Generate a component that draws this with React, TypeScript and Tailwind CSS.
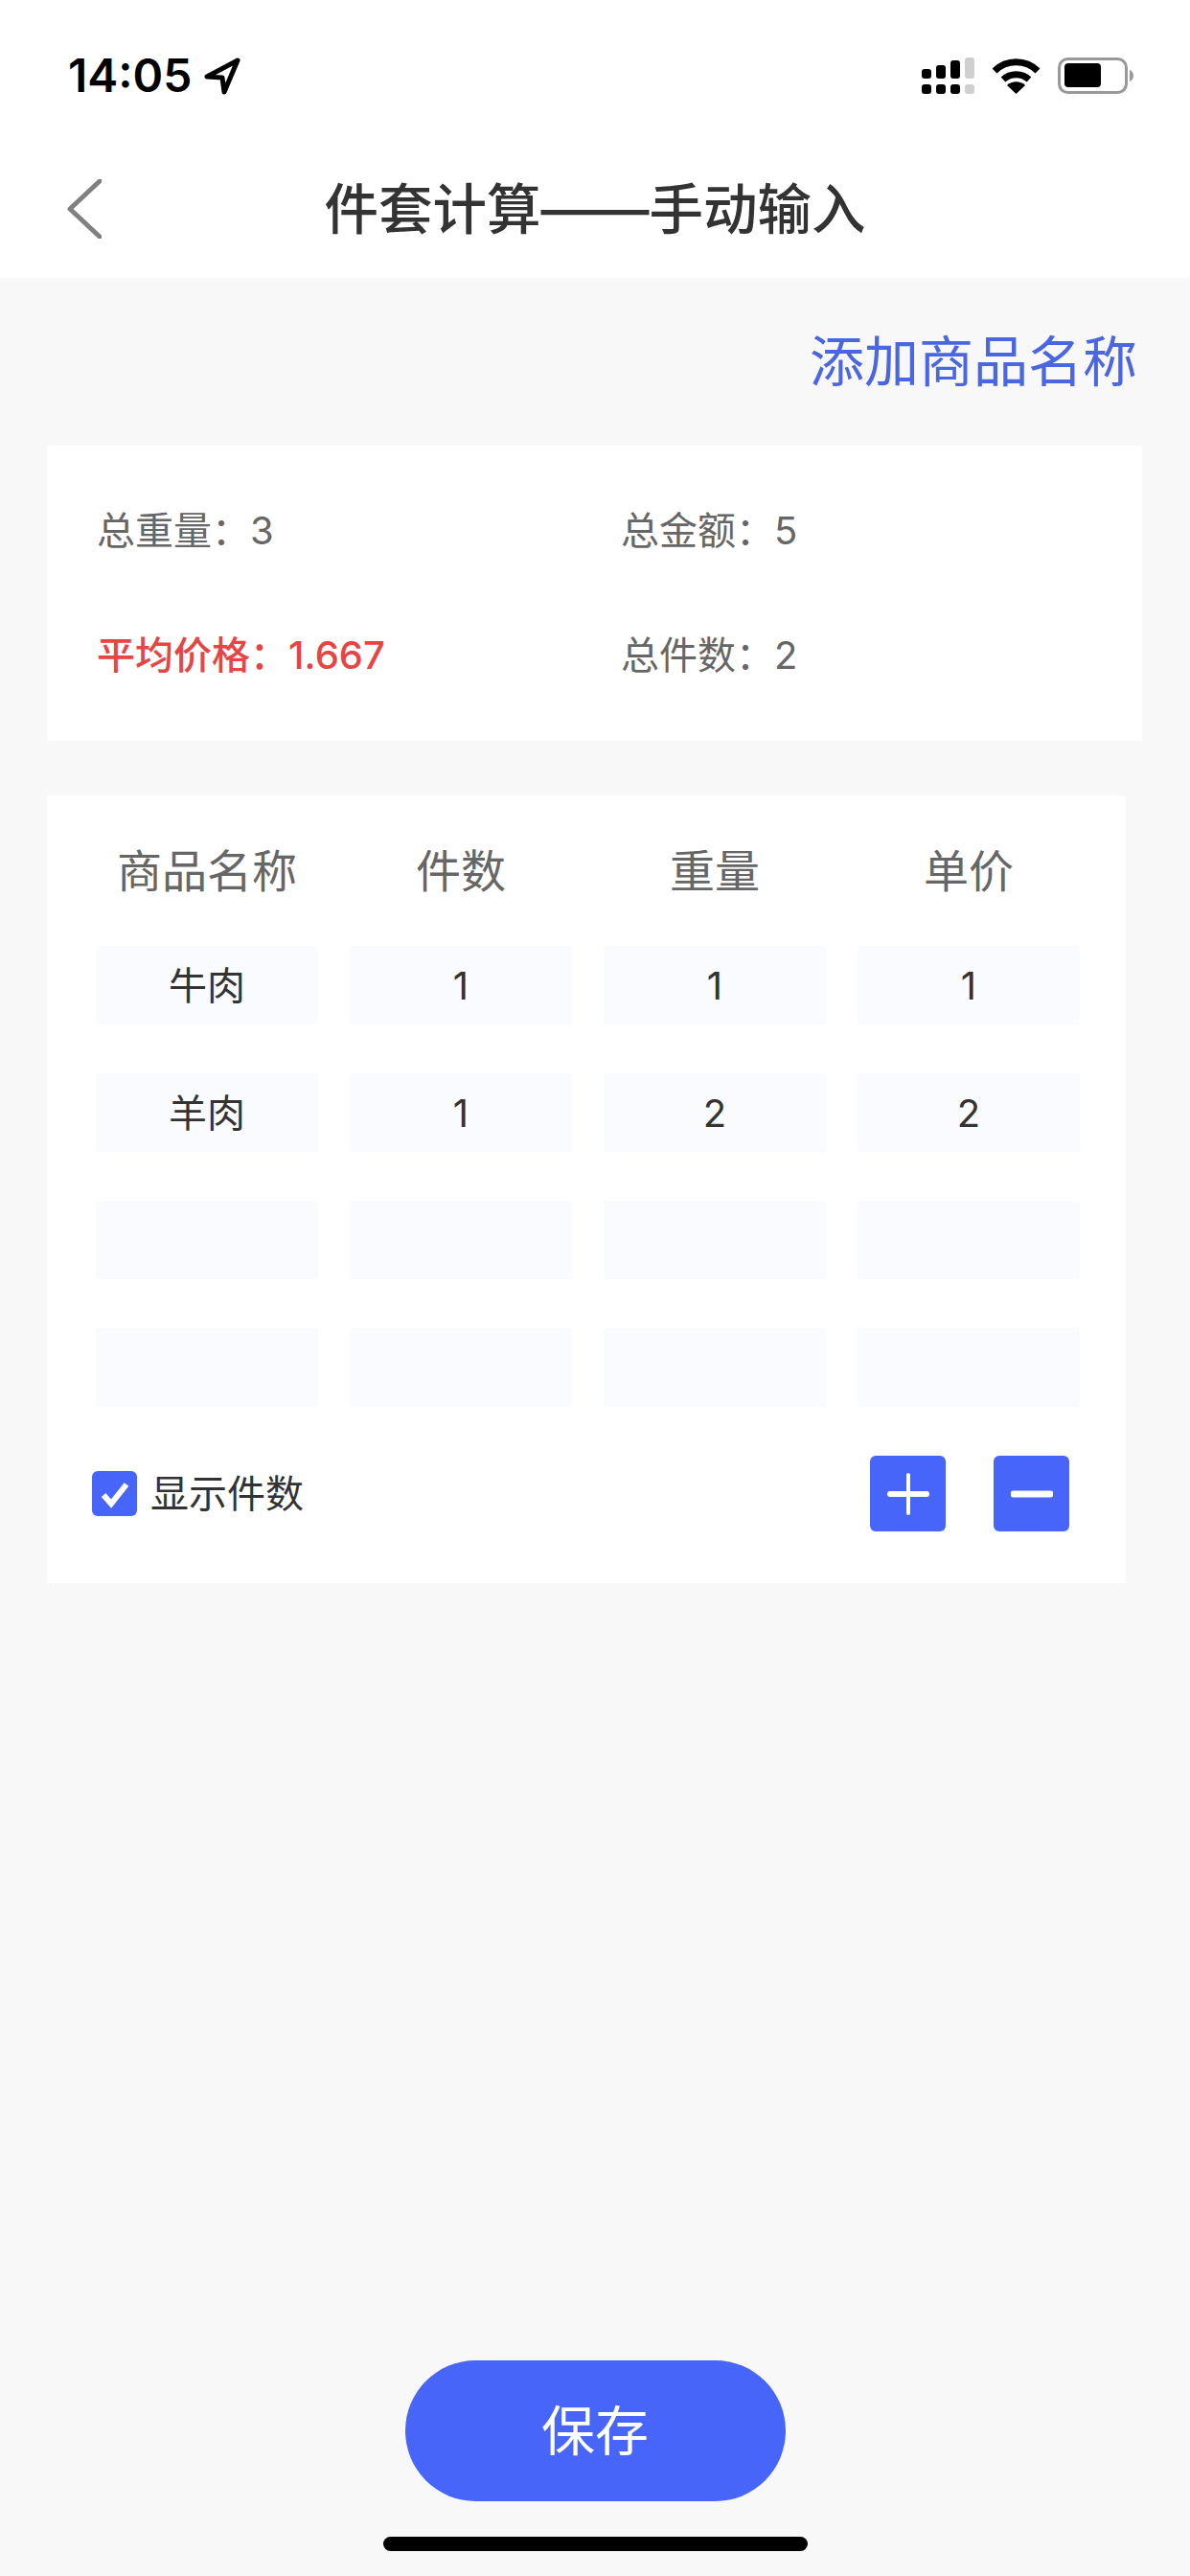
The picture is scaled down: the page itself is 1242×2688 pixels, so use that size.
import React from 'react';

const rows = [
  ['牛肉', '1', '1', '1'],
  ['羊肉', '1', '2', '2'],
  ['', '', '', ''],
  ['', '', '', ''],
];

const headers = ['商品名称', '件数', '重量', '单价'];

const StatusIcons = () => (
  <div className="flex items-center">
    {/* signal */}
    <svg width="55" height="38" viewBox="0 0 55 38">
      <rect x="0" y="12" width="10" height="10" rx="3" fill="#000" />
      <rect x="15" y="8" width="10" height="14" rx="3" fill="#000" />
      <rect x="30" y="3" width="10" height="19" rx="3" fill="#000" />
      <rect x="45" y="0" width="10" height="22" rx="3" fill="#cfcfcf" />
      <rect x="0" y="28" width="10" height="10" rx="3" fill="#000" />
      <rect x="15" y="28" width="10" height="10" rx="3" fill="#000" />
      <rect x="30" y="28" width="10" height="10" rx="3" fill="#000" />
      <rect x="45" y="28" width="10" height="10" rx="3" fill="#cfcfcf" />
    </svg>
    <svg className="ml-[18px]" width="51" height="37" viewBox="0 0 51 37">
      <path d="M3 13 A 32 32 0 0 1 48 13" fill="none" stroke="#000" strokeWidth="7" />
      <path d="M12 22 A 20 20 0 0 1 39 22" fill="none" stroke="#000" strokeWidth="7" />
      <path d="M25.5 37 L 16 28 A 14 14 0 0 1 35 28 Z" fill="#000" />
    </svg>
    <svg className="ml-[18px]" width="79" height="38" viewBox="0 0 79 38">
      <rect x="1.5" y="1.5" width="70" height="35" rx="9" fill="none" stroke="#999" strokeWidth="3" />
      <rect x="7" y="6" width="38" height="25" rx="4" fill="#000" />
      <path d="M75 13 C 78 14 79 17 79 19 C 79 21 78 24 75 25 Z" fill="#999" />
    </svg>
  </div>
);

export default function App() {
  return (
    <div className="flex h-[2688px] w-[1242px] flex-col bg-[#f8f8f9] font-['Inter','Noto_Sans_CJK_SC',sans-serif]">
      <div className="h-[290px] bg-white">
        {/* Status bar */}
        <div className="flex h-[158px] items-center justify-between pl-[71px] pr-[59px]">
          <div className="flex items-center gap-[12px]">
            <span className="text-[48px] font-semibold leading-none text-black">14:05</span>
            <svg width="40" height="40" viewBox="0 0 40 40">
              <path d="M36 4 L4 21 L20 22 L22 37 Z" fill="none" stroke="#000" strokeWidth="5" strokeLinejoin="round" />
            </svg>
          </div>
          <StatusIcons />
        </div>

        {/* Nav */}
        <div className="grid h-[120px] grid-cols-[1fr_auto_1fr] items-center pl-[70px]">
          <svg width="36" height="62" viewBox="0 0 36 62">
            <path d="M34 2 L3 31 L34 60" fill="none" stroke="#808080" strokeWidth="5" strokeLinecap="round" strokeLinejoin="round" />
          </svg>
          <h1 className="-ml-[70px] pt-[3px] text-[56.5px] font-medium leading-none text-[#333]">件套计算——手动输入</h1>
          <div />
        </div>
      </div>

      <div className="flex h-[175px] items-center justify-end pr-[55px] text-[57px] leading-none text-[#4a66e0]">
        添加商品名称
      </div>

      {/* Summary */}
      <div className="mx-[49px] grid h-[308px] w-[1143px] grid-cols-[547px_1fr] content-start gap-y-[80px] bg-white pl-[52px] pt-[64px] text-[40px] leading-[50px] text-[#666]">
        <div>总重量：3</div>
        <div>总金额：5</div>
        <div className="font-medium text-[#e54545]">平均价格：1.667</div>
        <div>总件数：2</div>
      </div>

      {/* Table */}
      <div className="ml-[49px] mt-[57px] h-[822px] w-[1126px] bg-white pl-[51px] pr-[48px] pt-[53px]">
        <div className="grid grid-cols-4 gap-x-[33px] text-center text-[47px] leading-[52px] text-[#666]">
          {headers.map((h) => (
            <div key={h}>{h}</div>
          ))}
        </div>
        <div className="mt-[52px] grid grid-cols-4 gap-x-[33px] gap-y-[51px]">
          {rows.flatMap((row, i) =>
            row.map((val, j) => (
              <div
                key={`${i}-${j}`}
                className="flex h-[82px] items-center justify-center bg-[#fafbfe] pt-[2px] text-[40px] text-[#333]"
              >
                {val}
              </div>
            ))
          )}
        </div>
        <div className="mt-[51px] flex items-center justify-between pr-[11px]">
          <div className="-ml-[4px] flex items-center gap-[14px]">
            <div className="flex h-[47px] w-[47px] items-center justify-center rounded-[6px] bg-[#4765f9]">
              <svg width="36" height="36" viewBox="0 0 36 36">
                <path d="M6 19 L14 28 L30 8" fill="none" stroke="#fff" strokeWidth="6" />
              </svg>
            </div>
            <span className="text-[40px] leading-none text-[#333]">显示件数</span>
          </div>
          <div className="flex gap-[50px]">
            <button className="flex h-[79px] w-[79px] items-center justify-center rounded-[6px] bg-[#4765f9]">
              <svg width="44" height="44" viewBox="0 0 44 44">
                <path d="M22 2 V42" stroke="#fff" strokeWidth="4" strokeLinecap="round" />
                <path d="M3 22 H41" stroke="#fff" strokeWidth="6" strokeLinecap="round" />
              </svg>
            </button>
            <button className="flex h-[79px] w-[79px] items-center justify-center rounded-[6px] bg-[#4765f9]">
              <svg width="44" height="44" viewBox="0 0 44 44">
                <path d="M3 22 H41" stroke="#fff" strokeWidth="7" strokeLinecap="round" />
              </svg>
            </button>
          </div>
        </div>
      </div>

      {/* Footer */}
      <div className="mt-auto flex flex-col items-center pb-[26px]">
        <button className="flex h-[147px] w-[397px] items-center justify-center rounded-full bg-[#4765f9] text-[56px] text-white">
          保存
        </button>
        <div className="mt-[37px] h-[15px] w-[443px] rounded-full bg-black" />
      </div>
    </div>
  );
}
